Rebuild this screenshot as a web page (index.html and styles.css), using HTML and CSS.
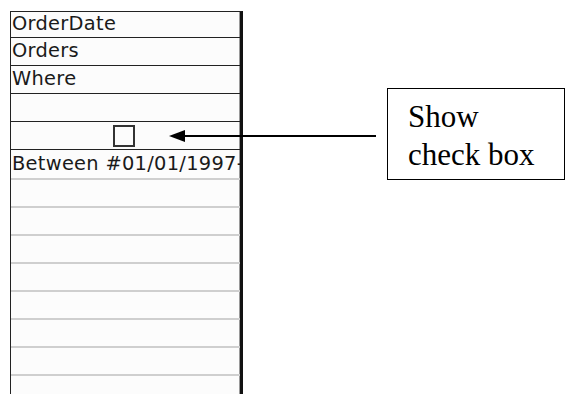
FILE: index.html
```html
<!DOCTYPE html>
<html>
<head>
<meta charset="utf-8">
<link rel="stylesheet" href="styles.css">
</head>
<body>
<div class="page">
  <div class="grid-col">
    <div class="row dark first">OrderDate</div>
    <div class="row dark">Orders</div>
    <div class="row dark">Where</div>
    <div class="row dark"></div>
    <div class="row dark check-row"><span class="checkbox"></span></div>
    <div class="row crit">Between #01/01/1997-</div>
    <div class="row light"></div>
    <div class="row light"></div>
    <div class="row light"></div>
    <div class="row light"></div>
    <div class="row light"></div>
    <div class="row light"></div>
    <div class="row light"></div>
    <div class="row light"></div>
  </div>
  <svg class="arrow" width="210" height="14" viewBox="0 0 210 14">
    <line x1="14" y1="7" x2="208" y2="7" stroke="#000" stroke-width="2"/>
    <polygon points="1,7 17,1 17,13" fill="#000"/>
  </svg>
  <div class="callout">Show<br>check box</div>
</div>
</body>
</html>
```
FILE: styles.css
```css
html, body {
  margin: 0;
  padding: 0;
  background: #fff;
  overflow: hidden;
}
.page {
  position: relative;
  width: 566px;
  height: 394px;
  overflow: hidden;
}
.grid-col {
  margin-left: 10px;
  margin-top: 11px;
  width: 229px;
  border-left: 1px solid #222;
  border-top: 1px solid #222;
  border-right: 3px solid #111;
  box-shadow: inset -1px 0 0 #999;
  background: #fcfcfc;
  font-family: "DejaVu Sans", Verdana, sans-serif;
  font-size: 19.4px;
  letter-spacing: 0.3px;
  color: #1a1a1a;
}
.row {
  box-sizing: border-box;
  height: 28px;
  padding-left: 1px;
  white-space: nowrap;
  overflow: hidden;
  line-height: 26px;
}
.row.first {
  height: 26px;
  line-height: 24px;
}
.row.dark {
  border-bottom: 1px solid #222;
}
.row.crit {
  height: 30px;
  border-bottom: 2px solid #cfcfcf;
  line-height: 28px;
}
.row.light {
  border-bottom: 2px solid #cfcfcf;
}
.check-row {
  display: flex;
  align-items: center;
  padding-left: 102px;
}
.checkbox {
  display: block;
  width: 18px;
  height: 18px;
  border: 2px solid #333;
  background: #fcfcfc;
}
.arrow {
  position: absolute;
  left: 168px;
  top: 129px;
}
.callout {
  position: absolute;
  left: 387px;
  top: 88px;
  border: 1px solid #000;
  padding: 9px 0 0 20px;
  box-sizing: border-box;
  width: 178px;
  height: 92px;
  background: #fff;
  font-family: "Liberation Serif", "Times New Roman", serif;
  font-size: 31px;
  line-height: 38px;
  color: #000;
}
```
